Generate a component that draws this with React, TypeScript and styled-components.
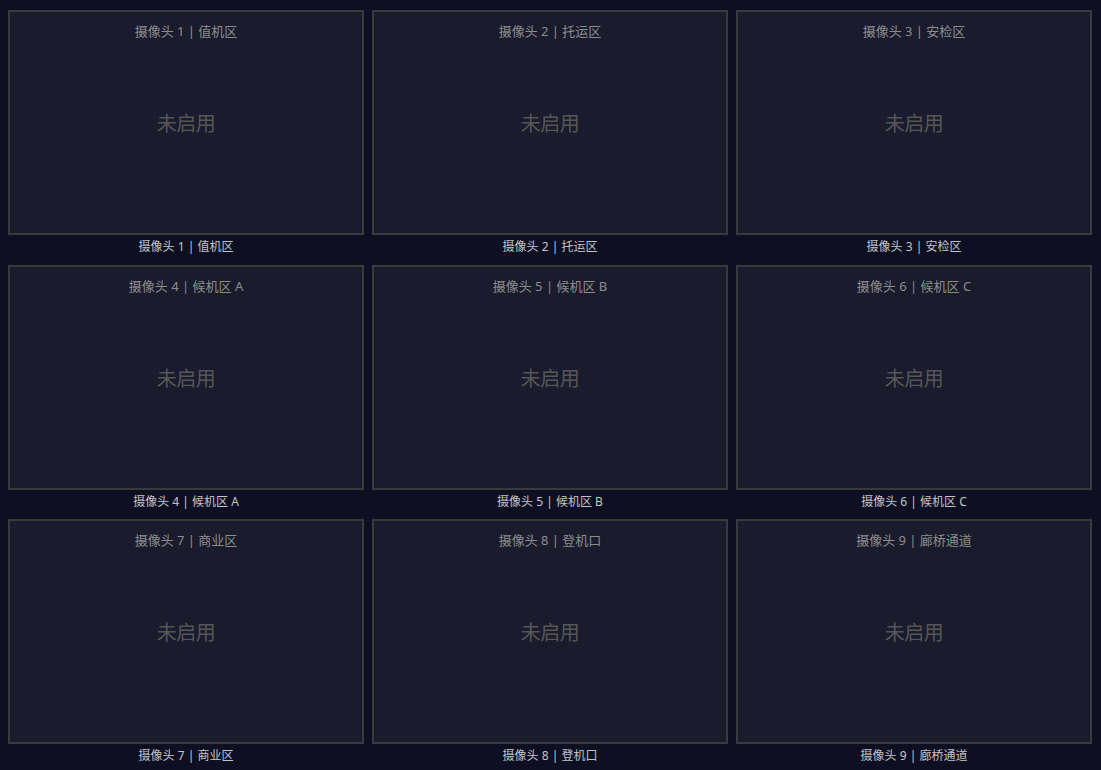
import React from "react";
import styled, { createGlobalStyle } from "styled-components";

const GlobalStyle = createGlobalStyle`
  html, body {
    margin: 0;
    padding: 0;
    background: #0e0f22;
    font-family: "Noto Sans", "Noto Sans CJK SC", sans-serif;
  }
`;

const Wall = styled.div`
  display: grid;
  grid-template-columns: repeat(3, 1fr);
  grid-auto-rows: 245px;
  align-content: start;
  column-gap: 8px;
  row-gap: 9.6px;
  padding: 10px 9px 0 8px;
  box-sizing: border-box;
  width: 1101px;
  height: 770px;
  overflow: hidden;
`;

const Cell = styled.div`
  display: flex;
  flex-direction: column;
`;

const Screen = styled.div`
  position: relative;
  height: 225px;
  flex: none;
  box-sizing: border-box;
  border: 2px solid #3a3a3c;
  background: #1b1b2e;
  display: flex;
  align-items: center;
  justify-content: center;
`;

const Title = styled.div`
  position: absolute;
  top: 10px;
  left: 0;
  right: 0;
  text-align: center;
  font-size: 13px;
  line-height: 18px;
  color: #8c8c8c;
`;

const Status = styled.div`
  font-family: "Noto Sans CJK SC", sans-serif;
  font-size: 20px;
  color: #565656;
  letter-spacing: -0.5px;
`;

const Caption = styled.div`
  height: 20px;
  line-height: 24px;
  text-align: center;
  font-size: 12px;
  color: #c4c4c8;
`;

const cameras = [
  "摄像头 1 | 值机区",
  "摄像头 2 | 托运区",
  "摄像头 3 | 安检区",
  "摄像头 4 | 候机区 A",
  "摄像头 5 | 候机区 B",
  "摄像头 6 | 候机区 C",
  "摄像头 7 | 商业区",
  "摄像头 8 | 登机口",
  "摄像头 9 | 廊桥通道",
];

export default function App() {
  return (
    <>
      <GlobalStyle />
      <Wall>
        {cameras.map((name) => (
          <Cell key={name}>
            <Screen>
              <Title>{name}</Title>
              <Status>未启用</Status>
            </Screen>
            <Caption>{name}</Caption>
          </Cell>
        ))}
      </Wall>
    </>
  );
}
